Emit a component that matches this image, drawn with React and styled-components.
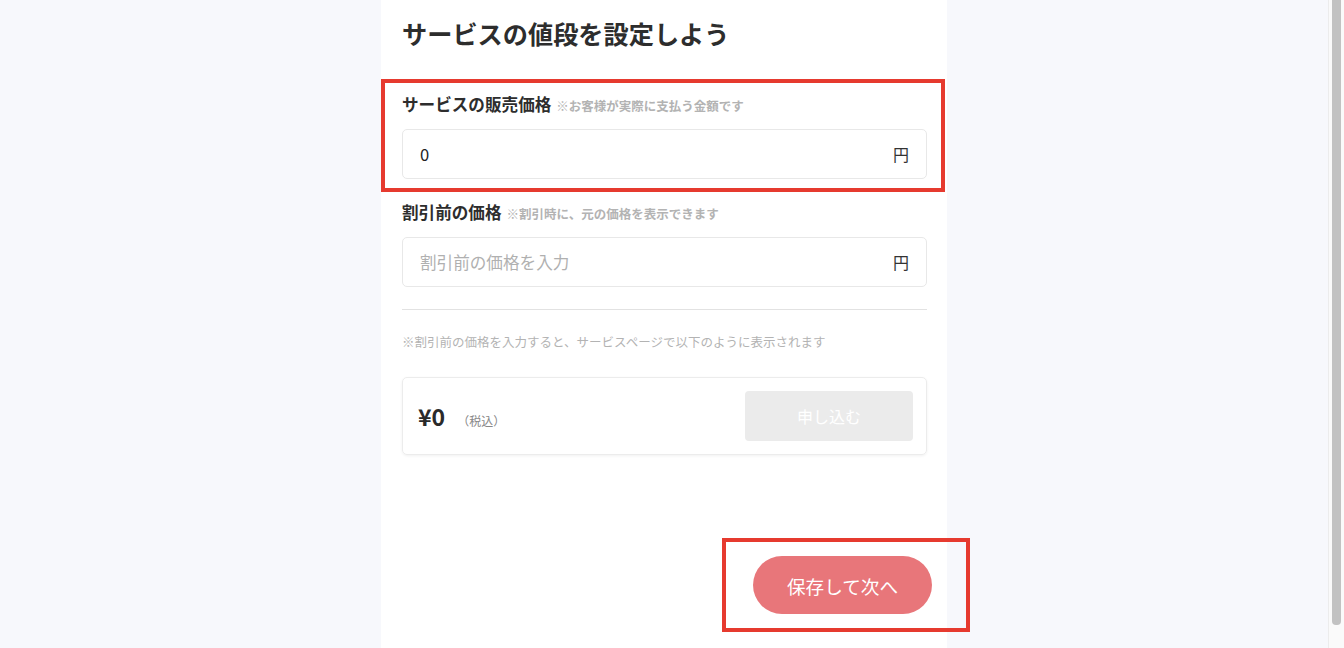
import React from 'react';
import styled, { createGlobalStyle } from 'styled-components';

const GlobalStyle = createGlobalStyle`
  html, body {
    margin: 0;
    padding: 0;
    background: #f7f8fc;
    font-family: "Noto Sans CJK JP", "Noto Sans", sans-serif;
    color: #333;
  }
  * { box-sizing: border-box; }
`;

const Page = styled.div`
  display: flex;
  height: 648px;
  overflow: hidden;
`;

const Main = styled.main`
  flex: 1;
  display: flex;
  justify-content: center;
`;

const Panel = styled.section`
  width: 566px;
  background: #fff;
  padding: 15px 20px 0 21px;
  display: flex;
  flex-direction: column;
`;

const Title = styled.h1`
  margin: 0;
  font-size: 25.2px;
  line-height: 36px;
  font-weight: 700;
  color: #2d2d2d;
`;

const Highlight = styled.div`
  border: 4px solid #e63a2f;
  margin: ${p => p.$margin || '0'};
  padding: ${p => p.$padding || '0'};
`;

const Field = styled.div`
  display: flex;
  flex-direction: column;
  gap: ${p => p.$gap || 13}px;
  margin-top: ${p => p.$top || 0}px;
`;

const LabelRow = styled.div`
  display: flex;
  align-items: baseline;
  gap: 5px;
  height: 24px;
  line-height: 24px;
`;

const Label = styled.span`
  font-size: 16.6px;
  font-weight: 700;
  color: #2d2d2d;
`;

const Hint = styled.span`
  font-size: 12.5px;
  font-weight: 700;
  color: #b3b3b3;
`;

const InputBox = styled.label`
  display: flex;
  align-items: center;
  height: 50px;
  padding: 0 17px 0 17px;
  border: 1px solid #e8e8e8;
  border-radius: 5px;
  background: #fff;
`;

const Input = styled.input`
  flex: 1;
  border: none;
  outline: none;
  background: transparent;
  font-family: inherit;
  font-size: 16.6px;
  color: #222;
  padding: 0;

  &::placeholder {
    color: #b0b0b0;
  }
`;

const Unit = styled.span`
  font-size: 16px;
  color: #333;
`;

const Divider = styled.hr`
  margin: 22px 0 0;
  border: none;
  border-top: 1px solid #e2e2e2;
`;

const Note = styled.p`
  margin: 22px 0 0;
  font-size: 12.5px;
  line-height: 20px;
  color: #b3b3b3;
`;

const PreviewCard = styled.div`
  margin-top: 25px;
  height: 78px;
  display: flex;
  align-items: center;
  justify-content: space-between;
  padding: 0 13px 0 15px;
  border: 1px solid #ececec;
  border-radius: 5px;
  box-shadow: 0 1px 3px rgba(0, 0, 0, 0.06);
`;

const Price = styled.div`
  display: flex;
  align-items: baseline;
  gap: 12px;
`;

const Amount = styled.span`
  font-size: 23px;
  font-weight: 700;
  color: #2a2a2a;
`;

const Tax = styled.span`
  font-size: 12px;
  color: #888;
`;

const ApplyButton = styled.button`
  width: 168px;
  height: 50px;
  border: none;
  border-radius: 4px;
  background: #ebebeb;
  color: #fff;
  font-family: inherit;
  font-size: 16px;
`;

const Footer = styled.div`
  display: flex;
  justify-content: flex-end;
`;

const SaveButton = styled.button`
  width: 179px;
  height: 58px;
  border: none;
  border-radius: 29px;
  background: #e8767a;
  color: #fff;
  font-family: inherit;
  font-size: 18.6px;
  display: block;
`;

const Scrollbar = styled.div`
  width: 16px;
  height: 648px;
  background: #fafafa;
  border-left: 1px solid #ececec;
  padding: 0 3px 0 3px;
`;

const Thumb = styled.div`
  height: 625px;
  border-radius: 0 0 4px 4px;
  background: #c2c2c2;
`;

export default function App() {
  return (
    <>
      <GlobalStyle />
      <Page>
        <Main>
          <Panel>
            <Title>サービスの値段を設定しよう</Title>

            <Highlight $margin="28px -18px 0 -21px" $padding="9px 14px 9px 17px">
              <Field>
                <LabelRow>
                  <Label>サービスの販売価格</Label>
                  <Hint>※お客様が実際に支払う金額です</Hint>
                </LabelRow>
                <InputBox>
                  <Input defaultValue="0" />
                  <Unit>円</Unit>
                </InputBox>
              </Field>
            </Highlight>

            <Field $top={8} $gap={13}>
              <LabelRow>
                <Label>割引前の価格</Label>
                <Hint>※割引時に、元の価格を表示できます</Hint>
              </LabelRow>
              <InputBox>
                <Input placeholder="割引前の価格を入力" />
                <Unit>円</Unit>
              </InputBox>
            </Field>

            <Divider />
            <Note>※割引前の価格を入力すると、サービスページで以下のように表示されます</Note>

            <PreviewCard>
              <Price>
                <Amount>¥0</Amount>
                <Tax>（税込）</Tax>
              </Price>
              <ApplyButton>申し込む</ApplyButton>
            </PreviewCard>

            <Footer>
              <Highlight $margin="83px -43px 0 0" $padding="14px 34px 14px 27px">
                <SaveButton>保存して次へ</SaveButton>
              </Highlight>
            </Footer>
          </Panel>
        </Main>
        <Scrollbar>
          <Thumb />
        </Scrollbar>
      </Page>
    </>
  );
}
